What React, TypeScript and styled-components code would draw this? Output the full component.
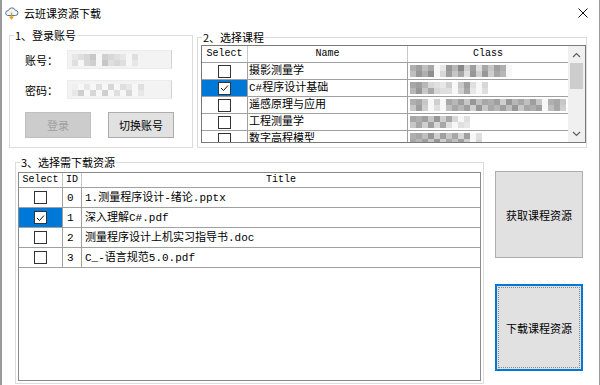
import React from "react";
import styled, { createGlobalStyle } from "styled-components";

const UI_FONT = `"Noto Sans CJK SC", "Noto Sans", sans-serif`;
const GRID_FONT = `"Liberation Mono", "Noto Sans CJK SC", monospace`;

const GlobalStyle = createGlobalStyle`
  html, body { margin: 0; padding: 0; background: #fff; }
  * { box-sizing: border-box; }
`;

// ---------- window frame ----------
const Window = styled.div`
  width: 600px;
  height: 385px;
  background: #fff;
  border-left: 2px solid #9a9a9a;
  border-right: 1px solid #9a9a9a;
  display: flex;
  flex-direction: column;
  overflow: hidden;
  font-family: ${UI_FONT};
  color: #000;
`;

const TitleBar = styled.div`
  height: 26px;
  flex: none;
  display: flex;
  align-items: center;
  padding: 0 11px 0 2px;
`;

const TitleText = styled.div`
  flex: 1;
  margin-left: 5px;
  font-size: 11px;
  line-height: 16px;
`;

const TopRow = styled.div`
  display: flex;
  align-items: flex-start;
  gap: 4px;
  padding-left: 7px;
  margin-top: 1px;
`;

const BottomRow = styled.div`
  display: flex;
  align-items: flex-start;
  gap: 11px;
  padding-left: 13px;
  margin-top: 6px;
`;

// ---------- group boxes ----------
const Group = styled.fieldset<{ $w: number; $h: number; $top?: number }>`
  margin: ${(p) => p.$top || 0}px 0 0 0;
  padding: 0;
  min-width: 0;
  width: ${(p) => p.$w}px;
  height: ${(p) => p.$h}px;
  border: 1px solid #dcdcdc;
`;

const Caption = styled.legend`
  margin-left: 4px;
  padding: 0 1px;
  font-size: 11px;
  line-height: 16px;
`;

const GroupBody = styled.div<{ $pad: string }>`
  padding: ${(p) => p.$pad};
  display: flex;
  flex-direction: column;
`;

// ---------- login group ----------
const FieldRow = styled.div<{ $gap: number }>`
  display: flex;
  align-items: center;
  height: 19px;
  margin-top: ${(p) => p.$gap}px;
`;

const FieldLabel = styled.div`
  width: 42px;
  font-size: 11px;
  line-height: 14px;
`;

const FakeInput = styled.div`
  width: 105px;
  height: 19px;
  background: #f3f3f3;
  border: 1px solid #ececec;
  border-right-color: #d4d4d4;
  display: flex;
  align-items: center;
  padding-left: 4px;
`;

const ButtonRow = styled.div`
  display: flex;
  gap: 17px;
  margin-top: 13px;
`;

const PushButton = styled.button<{ $disabled?: boolean }>`
  width: 66px;
  height: 26px;
  padding: 0;
  font-family: ${UI_FONT};
  font-size: 11px;
  background: ${(p) => (p.$disabled ? "#cccccc" : "#e1e1e1")};
  border: 1px solid ${(p) => (p.$disabled ? "#bfbfbf" : "#adadad")};
  color: ${(p) => (p.$disabled ? "#a0a0a0" : "#000")};
  border-radius: 0;
`;

const BigButtons = styled.div`
  display: flex;
  flex-direction: column;
  gap: 26px;
  margin-top: 17px;
`;

const BigButton = styled.button<{ $focused?: boolean }>`
  width: 88px;
  height: 87px;
  padding: 0;
  font-family: ${UI_FONT};
  font-size: 11px;
  color: #000;
  background: #e1e1e1;
  border-radius: 0;
  border: ${(p) => (p.$focused ? "2px solid #0078d7" : "1px solid #adadad")};
  outline: ${(p) => (p.$focused ? "1px dotted #8a8a8a" : "none")};
  outline-offset: -4px;
`;

// ---------- data grids ----------
const GridBox = styled.div<{ $w: number; $h: number; $border: string }>`
  width: ${(p) => p.$w}px;
  height: ${(p) => p.$h}px;
  border: 1px solid ${(p) => p.$border};
  background: #fff;
  display: flex;
  overflow: hidden;
`;

const GridBody = styled.div`
  flex: 1;
  min-width: 0;
  display: flex;
  flex-direction: column;
  overflow: hidden;
`;

const GridRow = styled.div<{ $cols: string; $h: number }>`
  flex: none;
  display: grid;
  grid-template-columns: ${(p) => p.$cols};
  height: ${(p) => p.$h}px;
  border-bottom: 1px solid #a0a0a0;
`;

const HeadCell = styled.div`
  border-right: 1px solid #c8c8c8;
  display: flex;
  align-items: center;
  justify-content: center;
  font-family: ${GRID_FONT};
  font-size: 10px;
  line-height: 12px;
  &:last-child { border-right: none; }
`;

const Cell = styled.div<{ $selected?: boolean; $center?: boolean; $pad?: number }>`
  border-right: 1px solid #a0a0a0;
  display: flex;
  align-items: center;
  justify-content: ${(p) => (p.$center ? "center" : "flex-start")};
  padding-left: ${(p) => p.$pad || 0}px;
  background: ${(p) => (p.$selected ? "#0078d7" : "#fff")};
  font-family: ${GRID_FONT};
  font-size: 11px;
  line-height: 14px;
  white-space: nowrap;
  overflow: hidden;
  &:last-child { border-right: none; }
`;

const CheckBox = styled.div`
  width: 13px;
  height: 13px;
  border: 1px solid #333;
  background: #fff;
  display: flex;
  align-items: center;
  justify-content: center;
`;

const ScrollBar = styled.div`
  width: 17px;
  flex: none;
  background: #f0f0f0;
  display: flex;
  flex-direction: column;
`;

const ScrollArrow = styled.div`
  height: 17px;
  display: flex;
  align-items: center;
  justify-content: center;
`;

const ScrollTrack = styled.div`
  flex: 1;
  padding: 0 2px;
`;

const ScrollThumb = styled.div`
  height: 26px;
  background: #cdcdcd;
`;

// ---------- pixelated (blurred) text ----------
const PixelStrip = styled.div`
  display: grid;
  grid-auto-flow: column;
  grid-template-rows: 6px 6px;
  grid-auto-columns: 6px;
`;

const Pixel = styled.div<{ $v: number }>`
  background: ${(p) => {
    const g = 247 - p.$v * 8;
    return `rgb(${g},${g},${g})`;
  }};
`;

function Pixelated({ top, bottom }: { top: string; bottom: string }) {
  const cells: React.ReactNode[] = [];
  for (let i = 0; i < top.length; i++) {
    const a = top[i] === " " ? 0 : parseInt(top[i], 16);
    const b = bottom[i] === " " || bottom[i] === undefined ? 0 : parseInt(bottom[i], 16);
    cells.push(<Pixel key={i + "t"} $v={a} />);
    cells.push(<Pixel key={i + "b"} $v={b} />);
  }
  return <PixelStrip>{cells}</PixelStrip>;
}

// ---------- icons ----------
function AppIcon() {
  return (
    <svg width="15" height="14" viewBox="0 0 15 14">
      <path
        d="M3.5 9.5 H11.5 A2.6 2.6 0 0 0 11.3 4.3 A3.6 3.6 0 0 0 4.4 4.6 A2.5 2.5 0 0 0 3.5 9.5 Z"
        fill="#eef4fb"
        stroke="#5d7088"
        strokeWidth="1"
      />
      <path d="M7.5 6.5 V12.5 M5.6 10.6 L7.5 12.8 L9.4 10.6" fill="none" stroke="#e0a020" strokeWidth="1.4" />
    </svg>
  );
}

function CloseIcon() {
  return (
    <svg width="10" height="10" viewBox="0 0 10 10">
      <path d="M0.5 0.5 L9.5 9.5 M9.5 0.5 L0.5 9.5" stroke="#111" strokeWidth="1" />
    </svg>
  );
}

function Chevron({ up }: { up?: boolean }) {
  return (
    <svg width="9" height="6" viewBox="0 0 9 6">
      <path d={up ? "M1 5 L4.5 1.5 L8 5" : "M1 1 L4.5 4.5 L8 1"} fill="none" stroke="#606060" strokeWidth="1.2" />
    </svg>
  );
}

function Check({ checked }: { checked?: boolean }) {
  return (
    <CheckBox>
      {checked && (
        <svg width="9" height="8" viewBox="0 0 9 8">
          <path d="M1 4 L3.5 6.5 L8 1.5" fill="none" stroke="#111" strokeWidth="1" />
        </svg>
      )}
    </CheckBox>
  );
}

// ---------- data ----------
const courses = [
  { name: "摄影测量学", top: "9b7a 2c8e5b3a6b9 ", bottom: "7c9d 4b6a3c5c5a8 " },
  { name: "C#程序设计基础", top: "ab84325 6b3 4", bottom: "8c6a433 5a2 3" },
  { name: "遥感原理与应用", top: "9a6 5 a8b6c7a9b5c8a7b6 9a6", bottom: "6b5 3 7a8b5c6a8b7c6a9b 7a5" },
  { name: "工程测量学", top: "a9b6c5a4 3", bottom: "6a5b4a3 32" },
  { name: "数字高程模型", top: "9a7c5b6a4b 3", bottom: "a8b6c5a7b5 4" },
];

const files = [
  { id: 0, title: "1.测量程序设计-绪论.pptx" },
  { id: 1, title: "深入理解C#.pdf", checked: true },
  { id: 2, title: "测量程序设计上机实习指导书.doc" },
  { id: 3, title: "C_-语言规范5.0.pdf" },
];

const COURSE_COLS = "46px 160px 1fr";
const FILE_COLS = "44px 19px 1fr";

export default function App(): JSX.Element {
  return (
    <>
      <GlobalStyle />
      <Window>
        <TitleBar>
          <AppIcon />
          <TitleText>云班课资源下载</TitleText>
          <CloseIcon />
        </TitleBar>

        <TopRow>
          <Group $w={184} $h={121}>
            <Caption>1、登录账号</Caption>
            <GroupBody $pad="0 0 0 15px">
              <FieldRow $gap={7}>
                <FieldLabel>账号：</FieldLabel>
                <FakeInput>
                  <Pixelated top="2346 5432 3" bottom="3 45 6343 2" />
                </FakeInput>
              </FieldRow>
              <FieldRow $gap={11}>
                <FieldLabel>密码：</FieldLabel>
                <FakeInput>
                  <Pixelated top="1 2 3 4 32 3" bottom="25 4 5 3 4 2" />
                </FakeInput>
              </FieldRow>
              <ButtonRow>
                <PushButton $disabled>登录</PushButton>
                <PushButton>切换账号</PushButton>
              </ButtonRow>
            </GroupBody>
          </Group>

          <Group $w={390} $h={119} $top={2}>
            <Caption>2、选择课程</Caption>
            <GroupBody $pad="0 0 0 3px">
              <GridBox $w={385} $h={98} $border="#7a7a7a">
                <GridBody>
                  <GridRow $cols={COURSE_COLS} $h={17}>
                    <HeadCell>Select</HeadCell>
                    <HeadCell>Name</HeadCell>
                    <HeadCell>Class</HeadCell>
                  </GridRow>
                  {courses.map((c, i) => (
                    <GridRow key={c.name} $cols={COURSE_COLS} $h={17}>
                      <Cell $center $selected={i === 1}>
                        <Check checked={i === 1} />
                      </Cell>
                      <Cell $pad={1}>{c.name}</Cell>
                      <Cell $pad={2}>
                        <Pixelated top={c.top} bottom={c.bottom} />
                      </Cell>
                    </GridRow>
                  ))}
                </GridBody>
                <ScrollBar>
                  <ScrollArrow>
                    <Chevron up />
                  </ScrollArrow>
                  <ScrollTrack>
                    <ScrollThumb />
                  </ScrollTrack>
                  <ScrollArrow>
                    <Chevron />
                  </ScrollArrow>
                </ScrollBar>
              </GridBox>
            </GroupBody>
          </Group>
        </TopRow>

        <BottomRow>
          <Group $w={469} $h={230}>
            <Caption>3、选择需下载资源</Caption>
            <GroupBody $pad="2px 0 0 2px">
              <GridBox $w={463} $h={209} $border="#8a8a8a">
                <GridBody>
                  <GridRow $cols={FILE_COLS} $h={15}>
                    <HeadCell>Select</HeadCell>
                    <HeadCell>ID</HeadCell>
                    <HeadCell>Title</HeadCell>
                  </GridRow>
                  {files.map((f) => (
                    <GridRow key={f.id} $cols={FILE_COLS} $h={20}>
                      <Cell $center $selected={f.checked}>
                        <Check checked={f.checked} />
                      </Cell>
                      <Cell $pad={4}>{f.id}</Cell>
                      <Cell $pad={3}>{f.title}</Cell>
                    </GridRow>
                  ))}
                </GridBody>
              </GridBox>
            </GroupBody>
          </Group>

          <BigButtons>
            <BigButton>获取课程资源</BigButton>
            <BigButton $focused>下载课程资源</BigButton>
          </BigButtons>
        </BottomRow>
      </Window>
    </>
  );
}
